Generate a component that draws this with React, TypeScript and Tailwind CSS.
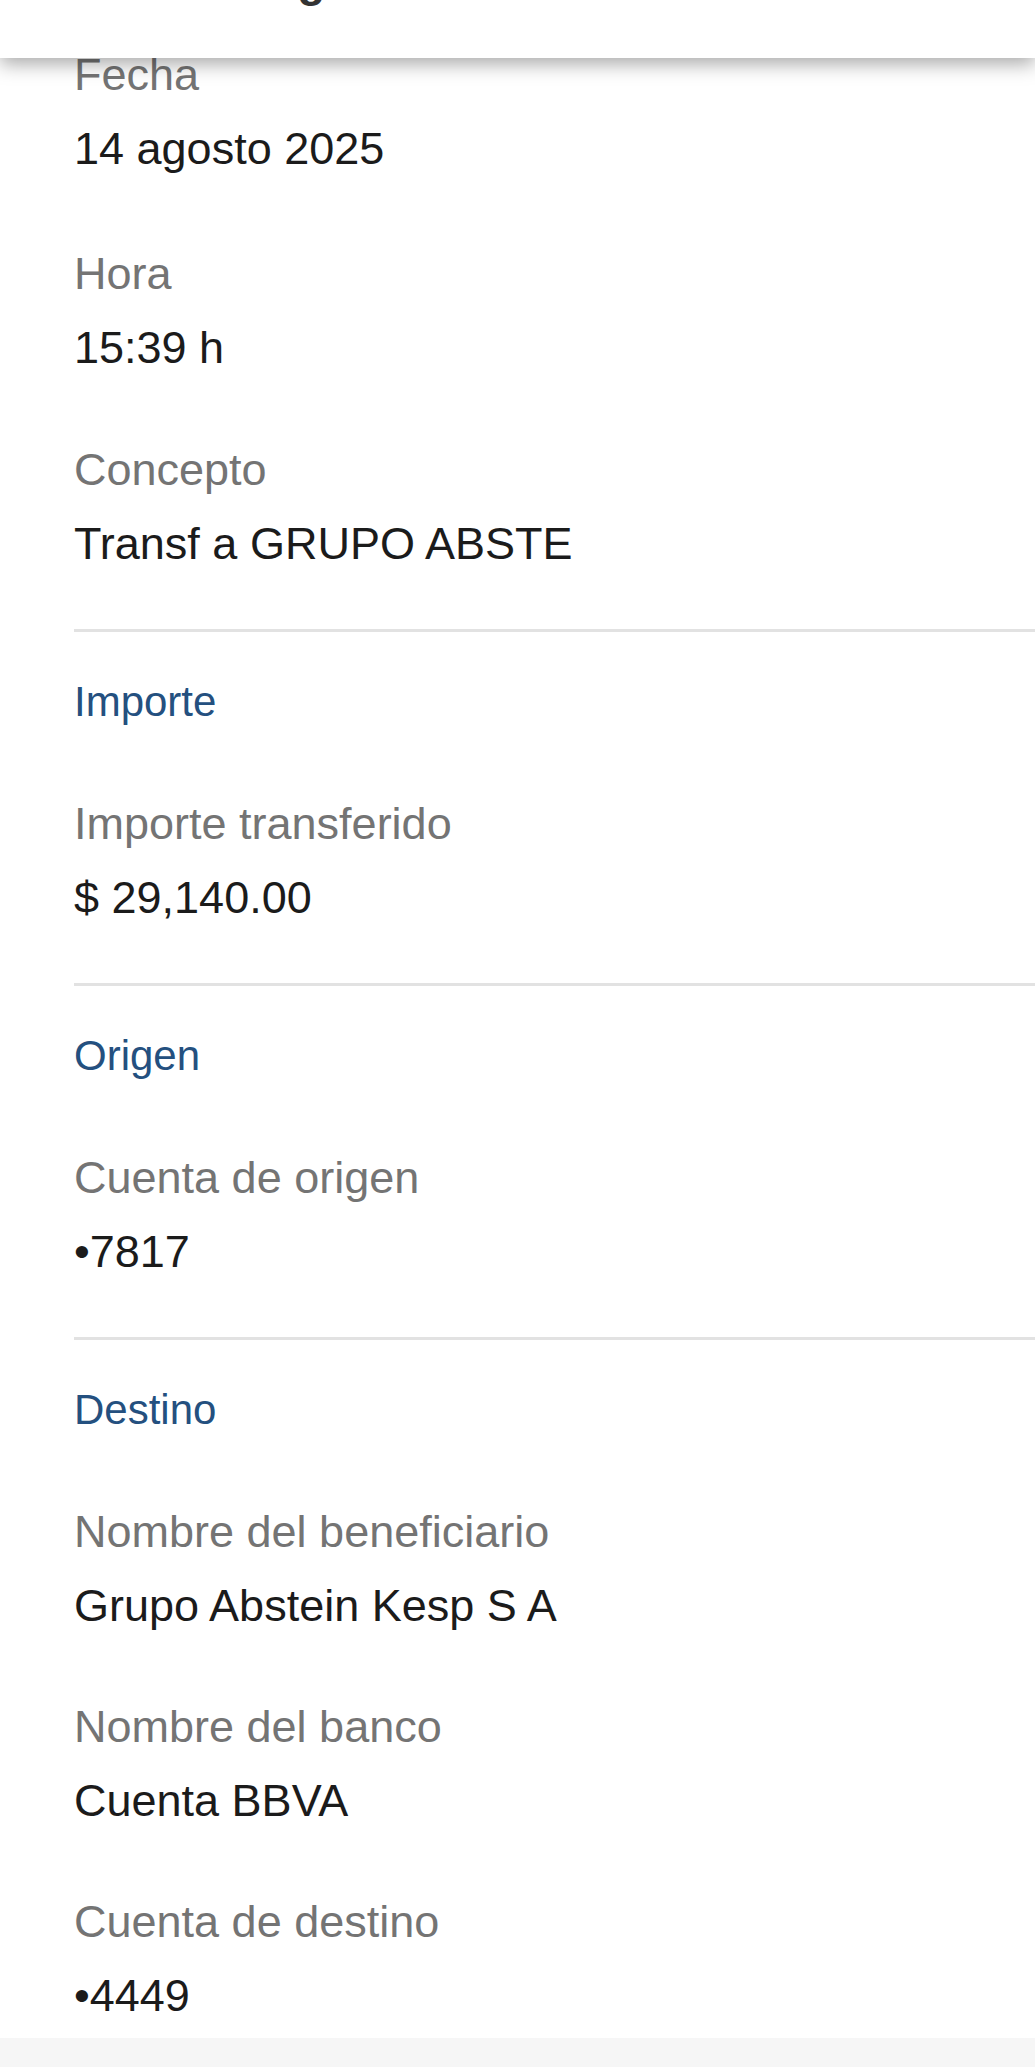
import React from 'react';

interface FieldProps {
  label: string;
  value: string;
  className?: string;
}

const Field: React.FC<FieldProps> = ({ label, value, className = '' }) => (
  <div className={className}>
    <p className="text-[45px] leading-[74px] text-[#747474]">{label}</p>
    <p className="text-[45px] leading-[74px] text-[#1b1b1b]">{value}</p>
  </div>
);

const SectionTitle: React.FC<{ title: string }> = ({ title }) => (
  <>
    <div className="mt-[48px] h-[3px] bg-[#e2e2e2]" />
    <h2 className="mt-[33px] text-[42px] leading-[74px] text-[#24507f]">{title}</h2>
  </>
);

const App: React.FC = () => {
  return (
    <div className="relative min-h-[2071px] bg-white font-['Liberation_Sans',Arial,sans-serif]">
      {/* top bar scrolled over the content, only the title's descender is left */}
      <header className="absolute inset-x-0 top-0 z-10 h-[58px] overflow-hidden bg-white shadow-[0_6px_18px_rgba(0,0,0,0.34)]">
        <p className="-mt-[43px] pl-[241px] text-[46px] font-bold leading-[46px] text-[#333333]">Pago</p>
      </header>

      <main className="pt-[38px] pl-[74px]">
        <Field label="Fecha" value="14 agosto 2025" />
        <Field label="Hora" value="15:39 h" className="mt-[51px]" />
        <Field label="Concepto" value="Transf a GRUPO ABSTE" className="mt-[48px]" />

        <div className="mt-[5px]" />
        <SectionTitle title="Importe" />
        <Field label="Importe transferido" value="$ 29,140.00" className="mt-[48px]" />

        <SectionTitle title="Origen" />
        <Field label="Cuenta de origen" value="•7817" className="mt-[48px]" />

        <SectionTitle title="Destino" />
        <Field label="Nombre del beneficiario" value="Grupo Abstein Kesp S A" className="mt-[48px]" />
        <Field label="Nombre del banco" value="Cuenta BBVA" className="mt-[47px]" />
        <Field label="Cuenta de destino" value="•4449" className="mt-[47px]" />
      </main>

      <footer className="mt-[5px] h-[29px] bg-[#f6f6f6]" />
    </div>
  );
};

export default App;
